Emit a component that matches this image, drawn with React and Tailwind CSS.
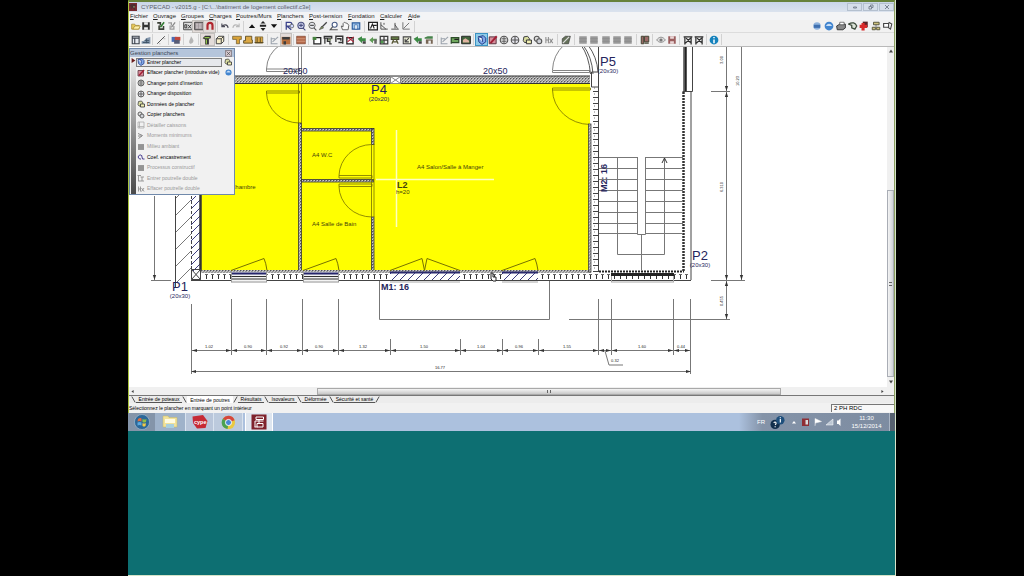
import { useState } from 'react';

const MENUS = [
  ['Fichier', 'w-[23px]'],
  ['Ouvrage', 'w-[28px]'],
  ['Groupes', 'w-[28px]'],
  ['Charges', 'w-[27px]'],
  ['Poutres/Murs', 'w-[41px]'],
  ['Planchers', 'w-[32px]'],
  ['Post-tension', 'w-[39px]'],
  ['Fondation', 'w-[32px]'],
  ['Calculer', 'w-[28px]'],
  ['Aide', 'w-[16px]'],
];

const MAIN_TOOLS = [
  ['w-[24px]', ['open', 'save']],
  ['w-[27px]', ['edit', 'editOff']],
  ['w-[38px]', ['dxf', 'layers!', 'magnet!']],
  ['w-[26px]', ['undo', 'redo']],
  ['w-[38px]', ['up', 'updown', 'down']],
  ['w-[83px]', ['zoomR', 'zoomIn', 'zoomOut', 'brush', 'zoom', 'hand', 'windowBlue']],
  ['w-[50px]', ['grid', 'angle', 'level', 'slope']],
];

const VIEW_TOOLS = [
  ['w-[24px]', ['panel', 'chart']],
  ['w-[16px]', ['line']],
  ['w-[15px]', ['colors']],
  ['w-[15px]', ['drop']],
  ['w-[30px]', ['column!', 'cube']],
  ['w-[39px]', ['beam', 'beamTwo', 'wall']],
  ['w-[26px]', ['slopeGray', 'brick!']],
  ['w-[15px]', ['wallRed']],
  ['w-[129px]', ['box', 'frame', 'steps', 'boxRed', 'arrowGreen', 'arrowGreenTwo', 'gridGreen', 'frameGreen', 'boxLine', 'arrowGreen', 'wallGreen']],
  ['w-[36px]', ['slopeGray', 'cutGreen', 'photo']],
  ['w-[84px]', ['slab*', 'slabErase', 'insert', 'target', 'data', 'copy', 'joistOff']],
  ['w-[17px]', ['slabLine']],
  ['w-[62px]', ['off', 'off', 'off', 'off', 'off']],
  ['w-[16px]', ['book']],
  ['w-[27px]', ['eye', 'saveRed']],
  ['w-[27px]', ['trestle', 'trestle']],
  ['w-[15px]', ['info']],
];

const HELP_TOOLS = ['globe', 'globeBlue', 'printer', 'pages', 'redCross', 'tree', 'exit'];

const PANEL_ITEMS = [
  ['slab', 'Entrer plancher', true],
  ['slabErase', 'Effacer plancher (introduire vide)', true],
  ['insert', "Changer point d'insertion", true],
  ['target', 'Changer disposition', true],
  ['data', 'Données de plancher', true],
  ['copy', 'Copier planchers', true],
  ['square', 'Détailler caissons', false],
  ['moments', 'Moments minimums', false],
  ['off', 'Milieu ambiant', false],
  ['coef', 'Coef. encastrement', true],
  ['off', 'Processus constructif', false],
  ['joist', 'Entrer poutrelle double', false],
  ['joistOff', 'Effacer poutrelle double', false],
];

const TABS = [
  ['Entrée de poteaux', 'w-[46px]'],
  ['Entrée de poutres', 'w-[46px]'],
  ['Résultats', 'w-[26px]'],
  ['Isovaleurs', 'w-[28px]'],
  ['Déformée', 'w-[27px]'],
  ['Sécurité et santé', 'w-[41px]'],
];

const GLYPHS = {
  open: <><path d="M1 13V5h5l1 2h6v6z" fill="#e8c85a" stroke="#9a7d26" /><path d="M3 13l3-5h9l-3 5z" fill="#fff0a8" stroke="#9a7d26" /></>,
  save: <><path d="M2 2h12v12H2z" fill="#333" /><path d="M5 2h6v4H5zM5 10h6v4H5z" fill="#eee" /></>,
  edit: <><path d="M2 3h5v4M5 7v6h7V8" fill="none" stroke="#3a3f36" strokeWidth="2.5" /><path d="M7 10l6-8" stroke="#2f7a2f" strokeWidth="2.5" /></>,
  editOff: <><path d="M2 3h5v4M5 7v6h6V8" fill="none" stroke="#9a9a9a" strokeWidth="2" /><path d="M7 10l6-8" stroke="#888" strokeWidth="2" /></>,
  dxf: <><path d="M1 2h14v12H1z" fill="#ddd" stroke="#444" strokeWidth="1.5" /><path d="M3 11V6h3v5zM8 6l5 6M13 6l-5 6" fill="none" stroke="#333" strokeWidth="1.5" /></>,
  layers: <><path d="M1 2h14v12H1z" fill="#9a8f93" stroke="#444" strokeWidth="1.5" /><path d="M3 5h10M3 8h10M3 11h10" stroke="#fff" strokeDasharray="4 1" /></>,
  magnet: <path d="M4 14V7a4 4 0 018 0v7" fill="none" stroke="#b0262e" strokeWidth="3.5" />,
  undo: <path d="M3 4v5h5M3 9c3-4 9-4 10 2" fill="none" stroke="#4c4c58" strokeWidth="1.8" />,
  redo: <path d="M13 4v5H8M13 9C10 5 4 5 3 11" fill="none" stroke="#b9b9b9" strokeWidth="1.8" />,
  up: <path d="M8 5l5 6H3z" fill="#111" />,
  updown: <path d="M8 0l4 4H4zM3 6h10v3H3zM8 16l4-5H4z" fill="#222" />,
  down: <path d="M8 11l5-6H3z" fill="#111" />,
  zoomR: <><path d="M2 14V2h6c4 0 4 6 0 6H3l7 6" fill="none" stroke="#39418a" strokeWidth="2" /><circle cx="11" cy="8" r="3" fill="#cfd8ff" stroke="#444" /></>,
  zoomIn: <><circle cx="8" cy="7" r="5" fill="#cfd4ee" stroke="#4a4f80" strokeWidth="1.8" /><path d="M5 7h6M8 4v6M11 11l4 4" stroke="#4a4f80" strokeWidth="1.8" /></>,
  zoomOut: <><circle cx="8" cy="7" r="5" fill="#e6e8ee" stroke="#666" strokeWidth="1.6" /><path d="M5 7h6M11 11l4 4" stroke="#555" strokeWidth="1.8" /></>,
  brush: <><path d="M14 2L6 10" stroke="#444" strokeWidth="2" /><path d="M2 14l4-6 3 3z" fill="#7c8b55" stroke="#555" /></>,
  zoom: <><circle cx="9" cy="6" r="4" fill="#fff" stroke="#475b86" strokeWidth="1.8" /><path d="M6 9l-4 5h12" fill="none" stroke="#555" strokeWidth="1.8" /></>,
  hand: <path d="M4 14L2 8l3 1V4l2-2 2 1 3 1 2 3-1 7z" fill="#fafafa" stroke="#555" strokeWidth="1.4" />,
  windowBlue: <><path d="M2 3h12v10H2z" fill="#9cc3ea" stroke="#2a5b9b" strokeWidth="1.8" /><path d="M6 6h4v7H6z" fill="#fff" stroke="#2a5b9b" /></>,
  grid: <><path d="M1 2h14v12H1z" fill="#fff" stroke="#222" strokeWidth="2" /><path d="M4 12l3-7 3 7M8 7h6" fill="none" stroke="#222" strokeWidth="1.8" /></>,
  angle: <path d="M3 2v11h11M3 6l8 7M8 3v3" fill="none" stroke="#555" strokeWidth="1.6" />,
  level: <path d="M2 13h12M8 3v9M8 6l4 6" fill="none" stroke="#555" strokeWidth="1.6" />,
  slope: <path d="M3 2v11h11M4 12l9-9" fill="none" stroke="#666" strokeWidth="1.4" />,
  panel: <path d="M2 2h11v12H2zM2 5h11M6 5v9" fill="#e6eaf0" stroke="#3d434d" strokeWidth="1.8" />,
  chart: <><path d="M1 14h14V3l-7 2-3 4-4 1z" fill="#8598ad" /><path d="M3 12h10M6 9h7M9 6v7" stroke="#3f5368" strokeWidth="1.5" /></>,
  line: <><path d="M2 14L14 2" stroke="#555" strokeWidth="1.6" /><path d="M5 14h2M12 6h3" stroke="#999" /></>,
  colors: <><path d="M1 3h8v8H1z" fill="#4b6db4" /><path d="M6 3h9v6H6z" fill="#c0473c" /><path d="M5 8h9v6H5z" fill="#565b75" /></>,
  drop: <path d="M8 2c4 6 5 7 3 10-2 3-6 2-6-1 0-3 2-4 3-9z" fill="#b5b5b5" />,
  column: <><path d="M1 5l4-4h9v4l-3 1v9H5V7z" fill="#333" /><path d="M4 4h8M7 7v7" stroke="#8fc24a" strokeWidth="2" /></>,
  cube: <path d="M2 6l4-4h8v8l-4 4H2zM2 6h8v8M10 6l4-4" fill="#f7efca" stroke="#444" strokeWidth="1.6" />,
  beam: <><path d="M1 2h14v5h-3v7H7V7H1z" fill="#d8a33a" stroke="#5b4a20" /></>,
  beamTwo: <path d="M4 2h10v6h1v5H1V9h3z" fill="#dca946" stroke="#5b4a20" strokeWidth="1.4" />,
  wall: <><path d="M2 3h12v10H2z" fill="#dca946" stroke="#5b4a20" /><path d="M1 12h14M5 4v8M10 4v8" stroke="#5b4a20" strokeWidth="1.5" /></>,
  slopeGray: <path d="M2 4v10h10M4 11l9-8M3 6h5" fill="none" stroke="#9ba3ad" strokeWidth="1.8" />,
  brick: <><path d="M1 3h14v12H1z" fill="#b9703d" /><path d="M2 3h12v4H2zM4 10h4v5H4z" fill="#3d3d3d" /></>,
  wallRed: <><path d="M1 2h14v12H1z" fill="#b4694a" stroke="#7b3e28" /><path d="M1 6h14M1 10h14" stroke="#e3b193" /></>,
  box: <><path d="M3 4h11v10H3z" fill="#fff" stroke="#222" strokeWidth="2" /><path d="M1 3h6v5H1z" fill="#46823e" /></>,
  frame: <><path d="M2 2h12v3H2zM3 5v9M7 5v5h4v4h3" fill="none" stroke="#333" strokeWidth="2" /><path d="M8 6h5v3H8z" fill="#7a8b65" /></>,
  frameGreen: <><path d="M2 3h12v4H2z" fill="#6c8f4d" stroke="#443" strokeWidth="1.8" /><path d="M3 14l3-7M13 14l-3-7M4 11h8" stroke="#553" strokeWidth="2" /></>,
  steps: <path d="M2 2h12v12M5 6h6v3M7 12h6M3 3v8" fill="none" stroke="#333" strokeWidth="2.2" />,
  boxRed: <><path d="M3 4h10v10H3z" fill="#fff" stroke="#222" strokeWidth="2" /><path d="M4 3l10 8M14 3L4 11" stroke="#b1263b" strokeWidth="2" /></>,
  arrowGreen: <><path d="M1 6l7-4v3h6v5H8v3z" fill="#3d8a45" /><path d="M9 10h5v4H9z" fill="#444" /></>,
  arrowGreenTwo: <><path d="M2 8l6-5v3h6v3H8v4z" fill="#5e9a55" /><path d="M10 7h4v7h-4z" fill="#666" /></>,
  gridGreen: <><path d="M2 2h12v12H2zM2 8h12M8 2v12" fill="none" stroke="#3c3c3c" strokeWidth="2" /><path d="M3 9h4v4H3z" fill="#4f9a4f" /></>,
  boxLine: <path d="M2 3h12v11H2zM5 11l6-6M5 6v5h6" fill="#edefd8" stroke="#444" strokeWidth="1.7" />,
  wallGreen: <><path d="M1 4l5-2h8v4H1z" fill="#46824a" /><path d="M3 7h11v7H3z" fill="#765" /><path d="M7 9h4v5H7z" fill="#eee" /></>,
  cutGreen: <><path d="M2 3v11M2 4h12v8H2" fill="#6fa75d" stroke="#2d4d2a" strokeWidth="2" /><path d="M7 7h7" stroke="#222" strokeWidth="2" /></>,
  photo: <><path d="M1 2h14v12H1z" fill="#41633b" stroke="#222" strokeWidth="1.5" /><path d="M3 8l4-3 6 4v3H3z" fill="#e0b3a0" /></>,
  slab: <><path d="M2 3l8-2 4 4v6l-6 4-5-4z" fill="#7fa7e8" stroke="#27408b" strokeWidth="1.6" /><path d="M2 3l6 1 1 7" fill="#fff" stroke="#27408b" strokeWidth="1.6" /></>,
  slabErase: <><path d="M2 3h11v11H2z" fill="#d78e9b" stroke="#5c3440" strokeWidth="1.6" /><path d="M4 13L14 2" stroke="#a32036" strokeWidth="3" /></>,
  insert: <><circle cx="8" cy="8" r="6" fill="#ddd" stroke="#555" strokeWidth="1.8" /><path d="M4 6h8M4 10h8M8 2v12" stroke="#555" strokeWidth="1.4" /></>,
  target: <><circle cx="8" cy="8" r="6" fill="#e3e3ea" stroke="#555" strokeWidth="1.8" /><path d="M2 8h12M8 2v12" stroke="#555" strokeWidth="1.8" /></>,
  data: <><path d="M2 9l1-6 6-1 3 4-2 6H4z" fill="#d8dc9e" stroke="#444" strokeWidth="1.6" /><path d="M7 8h8v6H7z" fill="#f1efb4" stroke="#333" strokeWidth="1.6" /></>,
  copy: <><circle cx="6" cy="6" r="4" fill="#ddd" stroke="#555" strokeWidth="1.8" /><circle cx="10" cy="10" r="4" fill="#cfd2d8" stroke="#555" strokeWidth="1.8" /></>,
  square: <path d="M2 2h12v12H2zM5 2v12M2 11h12" fill="none" stroke="#a9a9a9" strokeWidth="1.5" />,
  moments: <path d="M2 3l9 4-8 6M2 8h8" fill="none" stroke="#888" strokeWidth="2" />,
  off: <><path d="M2 2h12v12H2z" fill="#999" /><path d="M2 6h12M2 10h12" stroke="#858585" /></>,
  coef: <path d="M8 4H5L2 8l3 4h3M9 4l2 8h4" fill="none" stroke="#493e91" strokeWidth="2" />,
  joist: <path d="M3 3v11M1 3h7M10 6v8M7 6h7M2 14h12" fill="none" stroke="#8d8d8d" strokeWidth="1.7" />,
  joistOff: <path d="M3 3v10M7 3v10M3 8h5M9 6l5 7M14 6l-5 7" fill="none" stroke="#8d8d8d" strokeWidth="1.7" />,
  slabLine: <><path d="M2 6l5-4h8l-3 12H2z" fill="#65715a" stroke="#333" /><path d="M3 13L13 3" stroke="#ddd" strokeWidth="2" /></>,
  book: <><path d="M2 2h4v12H2zM7 2h7v9H7z" fill="#9b6a67" stroke="#443" strokeWidth="1.6" /><path d="M7 13h7" stroke="#443" strokeWidth="2" /></>,
  eye: <><path d="M1 8c4-6 10-6 14 0-4 5-10 5-14 0z" fill="#ddd" stroke="#888" strokeWidth="1.4" /><circle cx="8" cy="8" r="2.5" fill="#777" /></>,
  saveRed: <><path d="M2 2h12v12H2z" fill="#9a5e5e" /><path d="M5 2h6v4H5zM5 10h6v4H5z" fill="#ead6d6" /></>,
  trestle: <path d="M1 3h14M3 3v12M13 3v12M4 13l8-8M5 5l7 7" fill="none" stroke="#2f2f2f" strokeWidth="2" />,
  info: <><circle cx="8" cy="8" r="7" fill="#1683bd" /><path d="M8 3v2M8 7v6" stroke="#fff" strokeWidth="2.4" /></>,
  globe: <><circle cx="8" cy="8" r="6" fill="#8fb2dc" /><path d="M3 6h10v5H3z" fill="#3f70b0" /></>,
  globeBlue: <><circle cx="8" cy="8" r="7" fill="#4285cf" /><path d="M3 8c3-5 7-5 10 0z" fill="#c9e0f8" /></>,
  printer: <><path d="M1 8l5-3h9v6l-4 3H2z" fill="#888" stroke="#333" strokeWidth="1.5" /><path d="M6 2h7v4H6z" fill="#fff" stroke="#333" /></>,
  pages: <path d="M1 5c6-4 11-2 13 3l-3 5-5-2V7z" fill="#dce3d7" stroke="#3c4a3a" strokeWidth="2" />,
  redCross: <><path d="M6 1h8v9H6z" fill="#5b2226" /><path d="M4 3h5v3h4v5H9v4H4v-4H1V6h3z" fill="#d82a2a" /></>,
  tree: <><path d="M4 2h9v4H4zM2 10h5v4H2zM9 10h5v4H9z" fill="#cfc37d" stroke="#4c4c35" strokeWidth="1.4" /><path d="M8 6v4" stroke="#444" /></>,
  exit: <path d="M1 4h8v6H1zM9 2l5 3-2 8-4-3" fill="#fff" stroke="#444" strokeWidth="1.8" />,
};

function Glyph({ name, className = 'size-[10px]' }) {
  return (
    <svg viewBox="0 0 16 16" className={`${className} block shrink-0`} aria-hidden="true">
      {GLYPHS[name]}
    </svg>
  );
}

// A trailing "!" marks a pressed tool, "*" the active one
function ToolButton({ tool }) {
  const name = tool.replace(/[!*]/, '');
  let look = '';
  if (tool.endsWith('!')) look = 'bg-[#e3dcd9] outline outline-[#c3c0bd]';
  if (tool.endsWith('*')) look = 'bg-[#8fcbe8] outline outline-[#3b93c4]';
  return (
    <button type="button" aria-label={name} className={`flex h-[11px] flex-1 items-center justify-center ${look}`}>
      <Glyph name={name} />
    </button>
  );
}

function ToolGroups({ groups }) {
  return groups.map(([width, tools], idx) => (
    <div key={idx} className={`${width} flex h-[11px] shrink-0 items-center border-r border-[#d2d2d2] px-[2px]`}>
      {tools.map((tool, i) => (
        <ToolButton key={i} tool={tool} />
      ))}
    </div>
  ));
}

function TitleBar() {
  return (
    <header className="flex h-[10px] items-center bg-gradient-to-b from-[#c9d6e8] to-[#dbe3ee]">
      <span className="flex size-[8px] items-center justify-center bg-[#7a2a30]">
        <Glyph name="frame" className="size-[6px]" />
      </span>
      <h1 className="ml-1 flex-1 text-[6px] leading-[8px] whitespace-nowrap text-[#59606b]">
        CYPECAD - v2015.g - [C:\...\batiment de logement collectif.c3e]
      </h1>
      <div className="flex h-[8px] gap-px text-[#7b8594]">
        {['M5 10h6V8H5z', 'M4 7h5v5H4zM7 7V4h5v5H9', 'M4 4l8 8M12 4l-8 8'].map((d, i) => (
          <button key={d} type="button" aria-label={['Réduire', 'Restaurer', 'Fermer'][i]} className="flex w-[15px] items-center justify-center border border-[#b4c0cf] bg-[#d5deea]">
            <svg viewBox="0 0 16 16" className="size-[8px]" fill="none" stroke="currentColor" strokeWidth="2"><path d={d} /></svg>
          </button>
        ))}
      </div>
    </header>
  );
}

function FloorPanel() {
  return (
    <section className="absolute top-px left-0 w-[106px] border border-[#7089ab] bg-[#f1f1f1]">
      <div className="flex h-[8px] items-center justify-between bg-[#b5c5db] pr-[2px]">
        <h2 className="text-[6px] leading-[8px] text-[#3c4654]">Gestion planchers</h2>
        <button type="button" aria-label="Fermer" className="flex size-[7px] items-center justify-center border border-[#8d8890] bg-[#d3c6cd]">
          <svg viewBox="0 0 8 8" className="size-[5px]" stroke="#444"><path d="M1 1l6 6M7 1L1 7" /></svg>
        </button>
      </div>
      <div className="flex h-[137px]">
        <div className="ml-px w-[5px] bg-gradient-to-b from-[#f1f1f1] to-[#4a4a4a]">
          <svg viewBox="0 0 8 8" className="mt-px size-[5px]"><path d="M1 0l6 4-6 4z" fill="#6b1d1d" /></svg>
        </div>
        <ul className="flex flex-1 flex-col">
          {PANEL_ITEMS.map(([icon, label, enabled], i) => (
            <li key={label} className="flex flex-1 items-center pr-[2px]">
              <button
                type="button"
                disabled={!enabled}
                className={`flex h-[9px] w-[86px] items-center gap-[2px] border text-left text-[5px] leading-[7px] whitespace-nowrap ${i === 0 ? 'border-[#7e7e7e] bg-[#e6e8ec]' : 'border-transparent'} ${enabled ? 'text-black' : 'text-[#999]'}`}
              >
                <Glyph name={icon} className="size-[8px]" />
                {label}
              </button>
              {i === 0 && <button type="button" aria-label="Ouvrir la fiche" className="ml-auto"><Glyph name="data" className="size-[8px]" /></button>}
              {i === 1 && <button type="button" aria-label="Aide" className="ml-auto"><Glyph name="globeBlue" className="size-[7px]" /></button>}
            </li>
          ))}
        </ul>
      </div>
    </section>
  );
}

const WIDTH_TICKS = [
  [191, 304, 374], [231, 299, 355], [266, 299, 355], [302, 299, 355], [338, 299, 355],
  [390, 339, 355], [460, 339, 355], [502, 339, 355], [538, 339, 355],
  [598, 299, 355], [611, 299, 355], [673, 299, 355], [690, 299, 374],
];

const WIDTH_LABELS = [
  [209, '1.02'], [248, '0.90'], [284, '0.92'], [319, '0.90'], [363, '1.32'], [424, '1.50'],
  [481, '1.04'], [519, '0.96'], [567, '1.55'], [642, '1.60'], [681, '0.44'],
];

const STAIR_ROWS = [158, 169, 180, 191, 202, 213, 224, 234];

function Arrow({ x, y, dir }) {
  const turn = { right: 0, down: 90, left: 180, up: 270 }[dir];
  return <path d="M0 0l-5-1.6v3.2z" transform={`translate(${x} ${y}) rotate(${turn})`} fill="#333" stroke="none" />;
}

function PlanLabel({ x, y, name, size }) {
  return (
    <g fill="#25255c" textAnchor="middle">
      <text x={x} y={y} fontSize="13">{name}</text>
      <text x={x} y={y + 7} fontSize="6">{size}</text>
    </g>
  );
}

function FloorPlan() {
  return (
    <svg viewBox="129 47 758 340" className="block h-auto w-full bg-white font-['Liberation_Sans',sans-serif]" role="img" aria-label="Plan du plancher">
      <defs>
        <pattern id="concrete" width="3" height="3" patternUnits="userSpaceOnUse">
          <rect width="3" height="3" fill="#999" />
          <path d="M0 3l3-3" stroke="#ccc" strokeWidth="1" />
          <rect width="1" height="1" fill="#555" />
        </pattern>
        <pattern id="blocksX" width="6" height="10" patternUnits="userSpaceOnUse">
          <path d="M2.500 4v5" stroke="#333" strokeWidth="1" />
          <path d="M1 4.500h3" stroke="#666" />
        </pattern>
        <pattern id="blocksY" width="8" height="6" patternUnits="userSpaceOnUse">
          <path d="M1 1.500h5" stroke="#444" strokeWidth="1" />
          <path d="M2 4h1" stroke="#777" />
        </pattern>
        <pattern id="hatch" width="17" height="17" patternUnits="userSpaceOnUse">
          <path d="M-2 19L19-2" stroke="#555" strokeWidth=".8" />
        </pattern>
        <pattern id="hatchFine" width="8" height="8" patternUnits="userSpaceOnUse">
          <path d="M-1 9L9-1" stroke="#3d3d80" strokeWidth="1" />
        </pattern>
      </defs>

      <rect x="200" y="84" width="390" height="187" fill="#ffff00" />

      {/* selected slab crosshair */}
      <path d="M396.500 130v97M376 179.500h118" stroke="#ffffc0" strokeWidth="1.5" fill="none" />

      {/* top beam */}
      <rect x="200" y="76" width="390" height="7" fill="url(#concrete)" />
      <path d="M200 76h390M200 83.500h390" stroke="#333" strokeWidth="1.2" />
      <path d="M390.500 76.500h10v7h-10zM390.500 76.500l10 7M400.500 76.500l-10 7" fill="#fff" stroke="#888" />

      {/* partitions */}
      <g fill="url(#concrete)" stroke="#333" strokeWidth=".8">
        <rect x="298.500" y="123" width="3" height="148" />
        <rect x="301.500" y="128.500" width="72" height="2.500" />
        <rect x="371.500" y="128.500" width="2.500" height="16" />
        <rect x="301.500" y="179.500" width="72" height="2.500" />
        <rect x="371.500" y="217" width="2.500" height="54" />
      </g>
      <g fill="none" stroke="#777100" strokeWidth=".8">
        <path d="M298.500 84v39M301.500 84v39M371.500 144v73M374 144v73" />
        <path d="M339 175.500h33v2.500h-33zM339 175.500A33 32 0 01372 144.500" />
        <path d="M339 184h33v2.500h-33zM339 186.500A33 31 0 00372 217" />
        <path d="M266.500 91h33v2h-33zM266.500 93A33 31 0 00299 123" />
        <path d="M552.500 88h38v2h-38zM552.500 90A38 35 0 00590 124.500" />
      </g>
      <g fill="none" stroke="#777" strokeWidth=".9">
        <path d="M298.500 47v28M301.500 47v28" />
        <path d="M266.500 69h33v2.500h-33zM266.500 69Q267 54 280 45" />
        <path d="M552.500 70.500h37v2h-37zM552.500 70Q553 55 564 45" />
        <path d="M581 45Q589 56 590.500 74M583 45Q592 57 593 74M588 45Q597 57 598 72" stroke="#444" />
      </g>

      {/* outer walls */}
      <g stroke="#444" strokeWidth="1" fill="none">
        <rect x="191" y="196" width="9" height="75" fill="url(#hatchFine)" stroke="none" />
        <rect x="176" y="190" width="15" height="92" fill="url(#hatch)" stroke="none" />
        <path d="M175.500 196v91" />
        <path d="M191.500 196v84" strokeDasharray="3 2" />
        <path d="M200.500 84v187" stroke="#333" strokeWidth="2.500" />
        <path d="M191.500 269.500h9v10h-9zM191.500 269.500l9 10M200.500 269.500l-9 10" />
        <rect x="201" y="270" width="390" height="3" fill="url(#concrete)" stroke="none" />
        <rect x="202" y="273" width="488" height="7" fill="url(#blocksX)" stroke="none" />
        <path d="M191 280.500h500" />
        <rect x="588.500" y="124" width="2.500" height="148" fill="url(#concrete)" stroke="#444" strokeWidth=".8" />
        <rect x="592" y="86" width="6" height="186" fill="url(#blocksY)" stroke="none" />
        <path d="M598.500 47v225M591.500 72h7v15h-7z" />
        <path d="M599 271.500h85" stroke="#222" strokeWidth="2" strokeDasharray="2 1" />
        <path d="M685.500 47v44" stroke="#222" strokeWidth="2.500" />
        <path d="M683.500 47v44" stroke="#777" />
        <path d="M692.500 47v44.500h-10M691 92v188" />
        <path d="M683.500 92v179" stroke="#333" strokeWidth="2.500" strokeDasharray="2 1" />
      </g>

      {/* plain and shaded windows */}
      {[231, 303].map((x) => (
        <g key={x} stroke="#333" fill="none">
          <rect x={x} y="272" width="36" height="11" fill="#f3f3f3" stroke="none" />
          <path d={`M${x} 273.500h36`} stroke="#25256b" strokeWidth="2" />
          <path d={`M${x} 276.500h36M${x} 279h36`} strokeWidth="1" />
          <path d={`M${x} 282h36M${x + .5} 272v10M${x + 35.5} 272v10`} stroke="#999" />
          <path d={`M${x} 270.500L${x + 33} 258.500Q${x + 35} 263 ${x + 36} 270.500`} stroke="#777100" />
        </g>
      ))}
      {[[390, 70], [502, 36]].map(([x, w]) => (
        <g key={x} fill="none">
          <rect x={x} y="272" width={w} height="8" fill="#fff" />
          <rect x={x} y="272" width={w} height="8" fill="url(#hatchFine)" />
          <path d={`M${x} 272.500h${w}`} stroke="#2b2b6e" strokeWidth="2" />
          <path d={`M${x} 282h${w}`} stroke="#aaa" />
        </g>
      ))}
      <path d="M390 270.500l32-12 2.500 12 2.500-12 33 12M502 270.500l33-12q2 5 3 12" fill="none" stroke="#777100" />
      <rect x="611" y="273" width="63" height="3" fill="#222" />
      <path d="M611 282h63M611.500 276v6M673.500 276v6" stroke="#aaa" fill="none" />

      {/* stairs */}
      <g stroke="#777" fill="none">
        {STAIR_ROWS.map((y) => (
          <path key={y} d={`M599 ${y - .5}h39M645 ${y - .5}h38`} />
        ))}
        <path d="M637.500 158v76.500h8V158M617.500 158v96.500h47V158M641.500 234v37" />
        <path d="M662 163l2.500-5 2.500 5" stroke="#333" />
      </g>

      {/* dimensions */}
      <g stroke="#777" fill="none">
        {WIDTH_TICKS.map(([x, top, bottom]) => (
          <path key={x} d={`M${x + .5} ${top}V${bottom}`} />
        ))}
        <path d="M191 350.500h500M191 371.500h500M379.500 281v38.500h170V281M569 319.500h161" />
        <path d="M726.500 47v272M741.500 47v233M711 91.500h19M711 280.500h34M154.500 196v84M151 280.500h20" />
        <path d="M605 351l4 14h14" />
      </g>
      {WIDTH_TICKS.map(([x], i) => (
        <g key={x}>
          {i > 0 && <Arrow x={x} y={350.5} dir="right" />}
          {i < WIDTH_TICKS.length - 1 && <Arrow x={x + 1} y={350.5} dir="left" />}
        </g>
      ))}
      <Arrow x={191} y={371.5} dir="left" />
      <Arrow x={691} y={371.5} dir="right" />
      <Arrow x={154.5} y={280} dir="down" />
      <Arrow x={726.5} y={91} dir="down" />
      <Arrow x={726.5} y={92} dir="up" />
      <Arrow x={726.5} y={280} dir="down" />
      <Arrow x={726.5} y={281} dir="up" />
      <Arrow x={726.5} y={319} dir="down" />
      <Arrow x={741.5} y={280} dir="down" />

      <g fill="#222" fontSize="4" textAnchor="middle">
        {WIDTH_LABELS.map(([x, label]) => (
          <text key={x} x={x} y="348">{label}</text>
        ))}
        <text x="440" y="369">16.77</text>
        <text x="615" y="362">0.32</text>
        <text transform="translate(723 60) rotate(-90)">3.00</text>
        <text transform="translate(723 187) rotate(-90)">6.310</text>
        <text transform="translate(739 81) rotate(-90)">10.23</text>
        <text transform="translate(723 301) rotate(-90)">0.455</text>
      </g>

      <g fill="#45430c" fontSize="6">
        <text x="231" y="189">Chambre</text>
        <text x="312" y="157">A4 W.C</text>
        <text x="312" y="226">A4 Salle de Bain</text>
        <text x="417" y="169">A4 Salon/Salle à Manger</text>
        <text x="396" y="194">h=20</text>
      </g>

      <PlanLabel x={379} y={94} name="P4" size="(20x20)" />
      <PlanLabel x={608} y={66} name="P5" size="(20x30)" />
      <PlanLabel x={700} y={260} name="P2" size="(20x30)" />
      <PlanLabel x={180} y={291} name="P1" size="(20x30)" />
      <g fill="#25255c" fontSize="9">
        <text x="283" y="74">20x50</text>
        <text x="483" y="74">20x50</text>
        <g fontWeight="bold">
          <text x="397" y="188" fill="#45430c">L2</text>
          <text x="381" y="290">M1: 16</text>
          <text transform="translate(607 192) rotate(-90)">M2: 16</text>
        </g>
      </g>
      <path d="M491 273v6l2 2h3v-4h-3v-4z" fill="#fff" stroke="#222" />
    </svg>
  );
}

function SheetTabs() {
  const [active, setActive] = useState(1);
  return (
    <nav className="flex h-[8px] items-start border-t border-[#777] bg-[#ececec] pl-[2px]">
      {TABS.map(([tab, width], i) => (
        <div key={tab} className="flex">
          <svg viewBox="0 0 6 7" className="h-[7px] w-[5px]" fill="none" stroke="#333"><path d={i === active + 1 ? 'M1 7l4-7' : 'M1 0l4 7'} /></svg>
          <button
            type="button"
            onClick={() => setActive(i)}
            className={`${width} text-center text-[5px] leading-[6px] whitespace-nowrap text-black ${i === active ? 'bg-white' : 'border-b border-[#555]'}`}
          >
            {tab}
          </button>
        </div>
      ))}
      <svg viewBox="0 0 6 7" className="h-[7px] w-[5px]" fill="none" stroke="#333"><path d="M1 7l4-7" /></svg>
    </nav>
  );
}

function Taskbar() {
  return (
    <footer className="flex h-[18px] items-center bg-[#acc1de]">
      <button type="button" aria-label="Démarrer" className="flex h-full w-[27px] items-center justify-center bg-[#8494a9]">
        <svg viewBox="0 0 32 32" className="size-[16px]">
          <circle cx="16" cy="16" r="15" fill="#2d6798" stroke="#b7d0e5" />
          <path d="M8 10q4-3 7-1v6q-4-2-8 0z" fill="#e36b3a" />
          <path d="M17 10q4 2 8 0l-1 6q-4 2-7 0z" fill="#8fbd47" />
          <path d="M7 17q4-2 8 0v6q-4-2-8 0z" fill="#5aa9e0" />
          <path d="M17 18q4 2 7 0l-1 6q-3 2-6 0z" fill="#f3c945" />
        </svg>
      </button>
      <button type="button" aria-label="Explorateur" className="flex h-full w-[30px] items-center justify-center bg-[#9fb2ca]">
        <svg viewBox="0 0 32 32" className="size-[16px]">
          <path d="M2 4h10l2 3h16v19H2z" fill="#f1e29a" stroke="#c7b565" />
          <path d="M6 10h20v8H6z" fill="#fffbe2" />
          <path d="M8 20h16v8H8z" fill="#a9cfdf" />
        </svg>
      </button>
      <button type="button" aria-label="CYPE" className="flex h-full w-[29px] items-center justify-center border-x border-[#d9e3ef] bg-[#b9c6da]">
        <svg viewBox="0 0 32 32" className="size-[16px]">
          <path d="M1 5l21-3 9 12-4 14-17 1L2 18z" fill="#c62a35" />
          <text x="4" y="20" fontSize="11" fontWeight="bold" fill="#fff">cype</text>
        </svg>
      </button>
      <button type="button" aria-label="Chrome" className="flex h-full w-[29px] items-center justify-center border-r border-[#d9e3ef] bg-[#bccadd]">
        <svg viewBox="0 0 32 32" className="size-[15px]">
          <circle cx="16" cy="16" r="14" fill="#e9c93f" />
          <path d="M16 16L4 8a14 14 0 0125 3z" fill="#d5473c" />
          <path d="M16 16L4 8a14 14 0 0010 22z" fill="#4ba250" />
          <circle cx="16" cy="16" r="6.5" fill="#4a87d3" stroke="#fff" strokeWidth="2" />
        </svg>
      </button>
      <button type="button" aria-label="CYPECAD" className="ml-[2px] flex h-full w-[28px] items-center justify-center border-x border-white bg-[#dde5ef]">
        <svg viewBox="0 0 32 32" className="size-[16px]">
          <rect x="1" y="1" width="30" height="30" fill="#7f222c" />
          <path d="M10 6h15v5H10zM8 14h17M16 11v8M8 14v12M12 19h12v7H12zM7 26h6" fill="none" stroke="#fff" strokeWidth="2" />
        </svg>
      </button>
      <div className="ml-auto flex h-full w-[156px] items-center bg-gradient-to-r from-[#acc1de] via-[#8493a8] via-15% to-[#7d8ca1] pl-[18px] text-[6px] leading-[8px] text-white">
        <span className="w-[13px]">FR</span>
        <svg viewBox="0 0 32 32" className="size-[15px]">
          <circle cx="11" cy="20" r="10" fill="#122f4d" />
          <circle cx="22" cy="11" r="9" fill="#1e4f7c" />
          <path d="M8 17q3-4 5 0 0 2-2 4M11 24v2M22 4v2M22 8v8" fill="none" stroke="#fff" strokeWidth="2.5" />
        </svg>
        <svg viewBox="0 0 108 24" className="ml-[5px] h-[12px] w-[54px]">
          <path d="M8 10l4 5H4z" fill="#fff" />
          <path d="M24 5h14v15H24z" fill="#8e2f35" /><path d="M31 8h5v9h-5z" fill="#ddd" />
          <path d="M50 20V5l13 6-12 3" fill="#fff" stroke="#eee" />
          <path d="M72 18l14-12v12z" fill="#bcc7d4" stroke="#fff" />
          <path d="M94 9h3l4-4v15l-4-4h-3z" fill="#fff" />
        </svg>
        <time className="flex-1 text-center">11:30<br />15/12/2014</time>
        <span className="h-full w-[6px] border-l border-[#aab5c4] bg-[#56616f]" />
      </div>
    </footer>
  );
}

export default function App() {
  return (
    <div className="flex min-h-screen justify-center bg-black">
      <main className="flex w-3/4 flex-col border-r border-b border-[#d6e3c8] bg-[#0d6f72] font-['Liberation_Sans',sans-serif]">
        <div className="border-t-2 border-r border-l border-t-[#66823a] border-r-[#8da061] border-l-[#a8c23c] bg-[#f1f1f1]">
          <TitleBar />
          <nav className="flex h-[8px] items-center bg-[#f3f4f6] pl-px text-[6px] leading-[8px] text-[#222]">
            {MENUS.map(([label, width]) => (
              <button key={label} type="button" className={`${width} shrink-0 text-left whitespace-nowrap`}>
                <span className="underline">{label[0]}</span>{label.slice(1)}
              </button>
            ))}
          </nav>
          <div className="flex h-[13px] items-center border-b border-[#dcdcdc]">
            <ToolGroups groups={MAIN_TOOLS} />
            <div className="ml-auto flex w-[83px] items-center">
              {HELP_TOOLS.map((tool) => (
                <ToolButton key={tool} tool={tool} />
              ))}
            </div>
          </div>
          <div className="flex h-[14px] items-center border-b border-[#b9b9b9]">
            <ToolGroups groups={VIEW_TOOLS} />
          </div>

          <div className="relative flex">
            <div className="min-w-0 flex-1">
              <FloorPlan />
            </div>
            <div className="flex w-[7px] flex-col items-center bg-[#f0f0f0]">
              <svg viewBox="0 0 8 8" className="my-[2px] size-[4px]"><path d="M4 1l4 6H0z" fill="#444" /></svg>
              <div className="flex w-full flex-1 flex-col">
                <div className="basis-[42%]" />
                <div className="flex flex-1 items-center justify-center border border-[#a9adb5] bg-gradient-to-r from-[#f4f4f4] to-[#cfd2d8]">
                  <span className="h-[4px] w-[3px] border-y border-[#666]" />
                </div>
              </div>
              <svg viewBox="0 0 8 8" className="my-[3px] size-[4px]"><path d="M4 7l4-6H0z" fill="#444" /></svg>
            </div>
            <FloorPanel />
          </div>

          <div className="flex h-[8px] items-center bg-[#f0f0f0] px-[2px]">
            <svg viewBox="0 0 8 8" className="size-[3px]"><path d="M1 4l6-4v8z" fill="#444" /></svg>
            <div className="ml-[24%] flex h-[7px] w-[61%] items-center justify-center border border-[#a9a9a9] bg-gradient-to-b from-[#f4f4f4] to-[#c8c8c8]">
              <span className="h-[3px] w-[4px] border-x border-[#666]" />
            </div>
            <svg viewBox="0 0 8 8" className="mr-[8px] ml-auto size-[3px]"><path d="M7 4L1 0v8z" fill="#444" /></svg>
          </div>
          <SheetTabs />
          <div className="flex h-[10px] items-center leading-[8px] text-black">
            <p className="flex-1 text-[5px]">Sélectionnez le plancher en marquant un point intérieur</p>
            <p className="h-[8px] w-[63px] border-t border-l border-[#777] bg-[#f8f8f8] pl-[2px] text-[6px] leading-[7px]">2 PH RDC</p>
          </div>
        </div>
        <Taskbar />
      </main>
    </div>
  );
}
